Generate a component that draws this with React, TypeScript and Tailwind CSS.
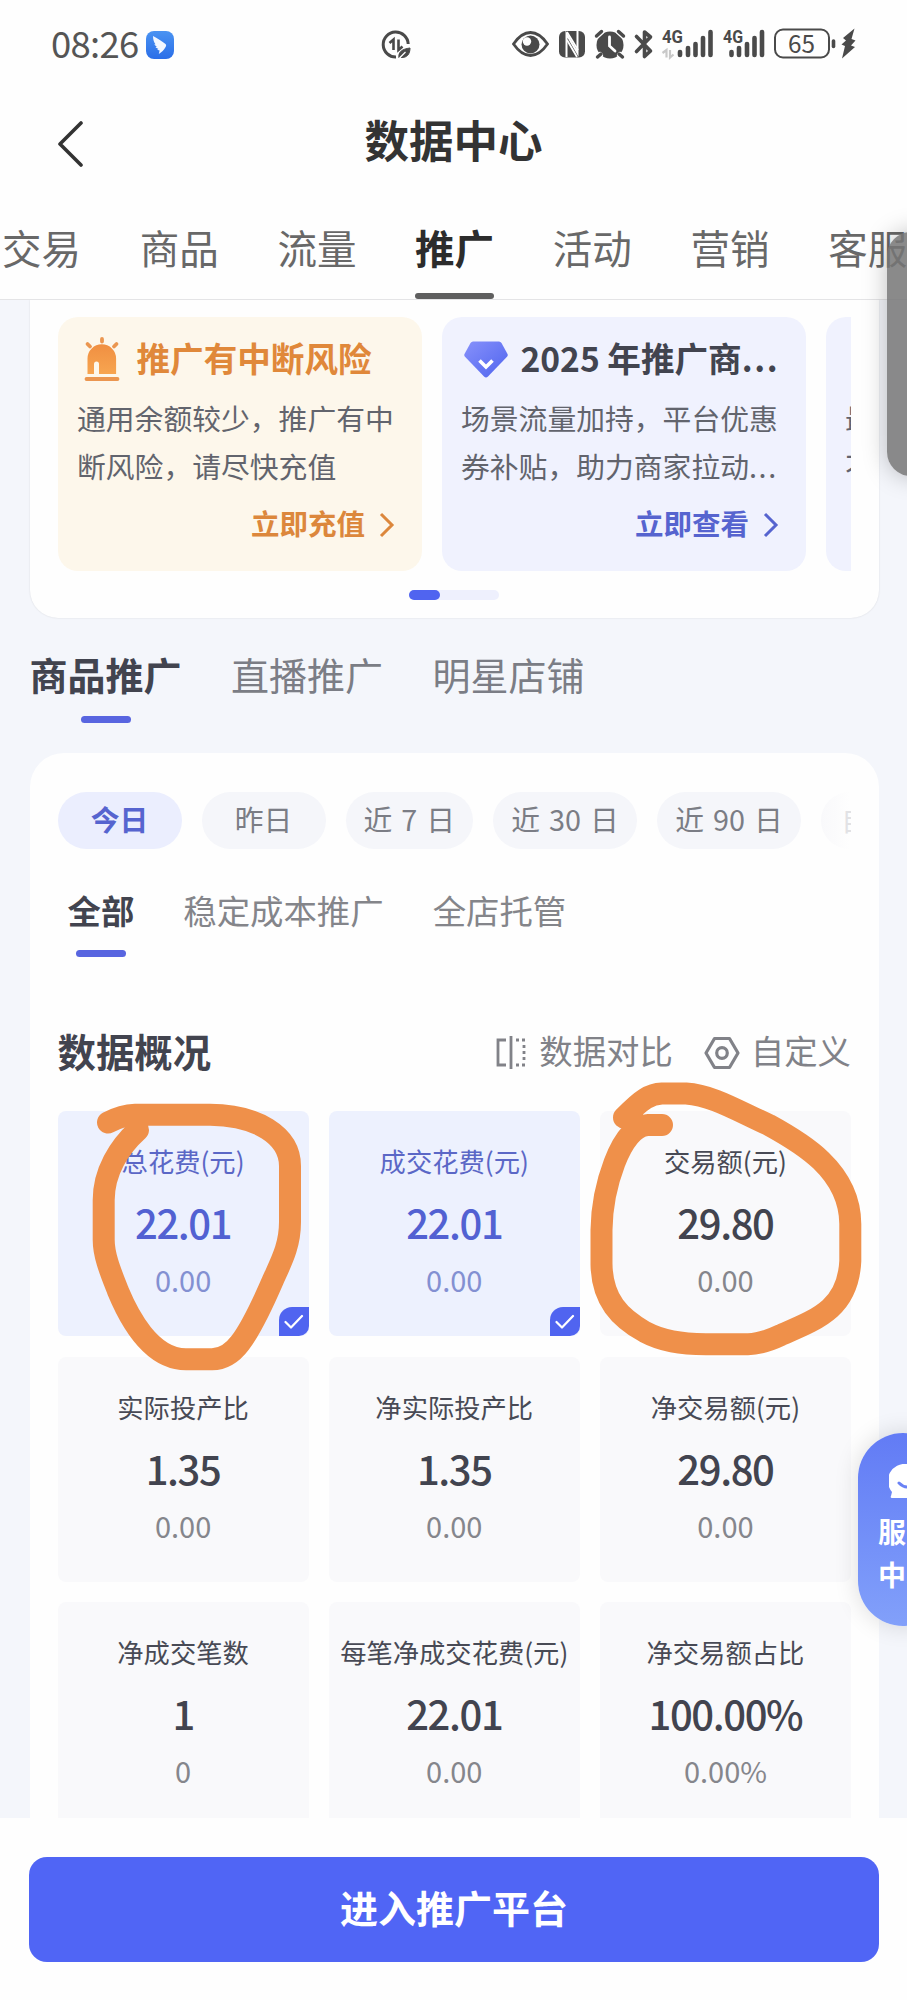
import React from "react";

const mainTabs = ["交易", "商品", "流量", "推广", "活动", "营销", "客服"];

const stats = [
  { label: "总花费(元)", value: "22.01", sub: "0.00", on: true },
  { label: "成交花费(元)", value: "22.01", sub: "0.00", on: true },
  { label: "交易额(元)", value: "29.80", sub: "0.00" },
  { label: "实际投产比", value: "1.35", sub: "0.00" },
  { label: "净实际投产比", value: "1.35", sub: "0.00" },
  { label: "净交易额(元)", value: "29.80", sub: "0.00" },
  { label: "净成交笔数", value: "1", sub: "0" },
  { label: "每笔净成交花费(元)", value: "22.01", sub: "0.00" },
  { label: "净交易额占比", value: "100.00%", sub: "0.00%" },
];

function Signal({ bars }: { bars: number[][] }) {
  return (
    <>
      {bars.map(([x, y]) => (
        <path key={x} d={`M${x} ${y}V55`} stroke="#4a4a4a" strokeWidth="4.6" strokeLinecap="round" />
      ))}
    </>
  );
}

function StatusBar() {
  return (
    <div className="flex h-[90px] shrink-0 items-center pl-[51px]">
      <span className="w-[95px] pb-[4px] text-[36.500px] leading-none font-normal tracking-[-0.7px] whitespace-nowrap text-[#555]">08:26</span>
      <svg className="h-7 w-7" viewBox="0 0 28 28">
        <defs>
          <linearGradient id="ding" x1="0" y1="0" x2="0" y2="1">
            <stop offset="0" stopColor="#4a93f2" />
            <stop offset="1" stopColor="#2a6ee8" />
          </linearGradient>
        </defs>
        <rect width="28" height="28" rx="8" fill="url(#ding)" />
        <path d="M7 5c5 3 9 5 12.500 8 1 1 .7 2-.2 3.500-1.300 2.200-3.500 4.800-6.500 6.500l.8-3.500-2.500-.8 1.300-.8-3-1.600 1.400-.5-2.600-2.300 1.300-.2C8 11.500 7 8.500 7 5z" fill="#f3f8ff" />
      </svg>
      <svg className="ml-[207px] h-[30px] w-[30px]" viewBox="0 0 30 30" fill="none" stroke="#4a4a4a">
        <path d="M15 27A12.500 12.500 0 1 1 27.200 14" strokeWidth="3" />
        <path d="M8.500 13l4-3.500V20M17.500 9.500V20l4-3.500" strokeWidth="2.600" />
        <path d="M18 28c-1-6 3-9 11-10 0 6-3 10-9 9.500l5-5.500" fill="#4a4a4a" strokeWidth="1" />
        <path d="M18.500 28l6-6" stroke="#fff" strokeWidth="1.200" />
      </svg>
      <svg className="ml-[100px] h-[90px] w-[346px]" viewBox="511 0 346 90" fill="none">
        <path d="M513.500 44C519 36 524 32.500 530.500 32.500S542 36 547.500 44C542 52 537 55.500 530.500 55.500S519 52 513.500 44z" stroke="#4a4a4a" strokeWidth="2.800" />
        <circle cx="530.500" cy="44.500" r="9" fill="#4a4a4a" />
        <circle cx="527" cy="41.500" r="4.200" fill="#fff" />
        <rect x="559" y="31" width="26" height="26.500" rx="6" fill="#4a4a4a" />
        <path d="M566.500 57V34L577.500 53V31" stroke="#fff" strokeWidth="2" />
        <path d="M567 32l11 18M567 40l10 17" stroke="#fff" strokeWidth="1.800" />
        <circle cx="610" cy="45" r="13.500" fill="#4a4a4a" />
        <path d="M596.500 36l5-4.500M623.500 36l-5-4.500M600 55l-2.500 2.500M620 55l2.500 2.500" stroke="#fefefe" strokeWidth="6" strokeLinecap="round" />
        <path d="M596.500 36l5-4.500M623.500 36l-5-4.500M601 54l-3.500 3M619 54l3.500 3" stroke="#4a4a4a" strokeWidth="3.400" strokeLinecap="round" />
        <path d="M609.500 37v9l5.500 5" stroke="#fff" strokeWidth="2.800" strokeLinecap="round" />
        <path d="M636.500 36.500l14 14.500-6 5.500V32l6 5-14 14.500" stroke="#4a4a4a" strokeWidth="3.600" strokeLinecap="round" strokeLinejoin="round" />
        <text x="662" y="43" className="font-['Roboto','Liberation_Sans',sans-serif] text-[18px] font-bold" textLength="21" lengthAdjust="spacingAndGlyphs" fill="#4a4a4a">4G</text>
        <path d="M662.500 53l4-3v7.500M670 50v7.500l3.500-3" stroke="#c8c8c8" strokeWidth="2.200" />
        <Signal bars={[[680, 52], [688, 48], [695.500, 44], [703, 38], [710.500, 32]]} />
        <text x="723" y="43" className="font-['Roboto','Liberation_Sans',sans-serif] text-[18px] font-bold" textLength="20" lengthAdjust="spacingAndGlyphs" fill="#4a4a4a">4G</text>
        <Signal bars={[[731.500, 52], [739, 48], [747, 44], [754.500, 38], [762, 32]]} />
        <rect x="775" y="29.500" width="54" height="28" rx="8" stroke="#4a4a4a" strokeWidth="2" />
        <text x="788" y="53" className="font-['Noto_Sans_CJK_SC',sans-serif] text-[25px] font-normal" textLength="27" lengthAdjust="spacingAndGlyphs" fill="#4a4a4a">65</text>
        <path d="M833.500 41v5.500" stroke="#4a4a4a" strokeWidth="3.600" strokeLinecap="round" />
        <path d="M854.500 28.500L843 38l3 2.500-4.500 4 3.500 1.500-3 12.500L855 47l-4-1.500 4.500-5-4-1.500z" fill="#4a4a4a" />
      </svg>
    </div>
  );
}

function Chevron() {
  return (
    <svg className="mt-[3px] h-[26px] w-4" viewBox="0 0 16 26" fill="none" stroke="currentColor" strokeWidth="3">
      <path d="M2 2l11 11L2 24" />
    </svg>
  );
}

function Siren() {
  return (
    <svg className="mt-[2px] h-[46px] w-9" viewBox="0 0 36 46">
      <defs>
        <linearGradient id="siren" x1="0" y1="0" x2="0" y2="1">
          <stop offset="0" stopColor="#f08f42" />
          <stop offset="1" stopColor="#f7a550" />
        </linearGradient>
      </defs>
      <path d="M3.500 38V22.500a14.300 14.300 0 0 1 28.600 0V38H15V28a2.500 2.500 0 0 0-5 0v10z" fill="url(#siren)" />
      <path d="M2.500 43h31M18 3v2.500M3.500 8l2.500 2.500M32.500 8L30 10.500" stroke="#eb9650" strokeWidth="3.800" strokeLinecap="round" />
    </svg>
  );
}

function Gem() {
  return (
    <svg className="mt-[3px] h-[37px] w-[44px]" viewBox="0 0 44 37">
      <defs>
        <linearGradient id="gem" x1="0" y1="0" x2="1" y2="1">
          <stop offset="0" stopColor="#8791fb" />
          <stop offset="1" stopColor="#4f64ee" />
        </linearGradient>
      </defs>
      <path d="M9 .5h26q1.500 0 2.500 1.500l6 11q.7 1.500-.5 2.800L24 35.500q-2 1.800-4 0L1 15.800q-1.200-1.300-.5-2.800l6-11Q7.500.5 9 .5z" fill="url(#gem)" />
      <path d="M15.500 19.500l6.500 6.500 6.500-6.500" fill="none" stroke="#fff" strokeWidth="3.600" />
    </svg>
  );
}

function Clipped({ text }: { text: string }) {
  return (
    <>
      {text}
      <span className="tracking-[1.600px]">...</span>
    </>
  );
}

function PromoCard(p: { icon: React.ReactNode; title: React.ReactNode; lines: React.ReactNode[]; link: string; card: string; titleCls: string; linkCls: string; iconCls: string }) {
  return (
    <div className={`flex h-[254px] w-[364.500px] shrink-0 flex-col rounded-[20px] ${p.card}`}>
      <div className="mt-[16px] flex h-[50px] items-center">
        <div className={`flex w-[79px] shrink-0 ${p.iconCls}`}>{p.icon}</div>
        <div className={`text-[33.600px] leading-none font-bold whitespace-nowrap ${p.titleCls}`}>{p.title}</div>
      </div>
      <div className="mt-[11px] pl-[19.500px] text-[28.800px] leading-[48.500px] whitespace-nowrap text-[#62646d]">
        {p.lines.map((l, i) => (
          <div key={i}>{l}</div>
        ))}
      </div>
      <div className={`mt-[13px] flex h-[40px] items-center justify-end gap-[14px] pr-[27px] text-[28.500px] font-bold ${p.linkCls}`}>
        {p.link}
        {p.link && <Chevron />}
      </div>
    </div>
  );
}

function StatCard({ label, value, sub, on }: { label: string; value: string; sub: string; on?: boolean }) {
  return (
    <div className={`relative flex h-[225px] flex-col items-center rounded-lg ${on ? "bg-[#edf1fe]" : "bg-[#f9f9fb]"}`}>
      <div className={`mt-[30px] text-[26.300px] leading-10 whitespace-nowrap ${on ? "text-[#5b67c6]" : "text-[#484a55]"}`}>{label}</div>
      <div className={`mt-[15px] text-[40px] leading-[52px] font-medium tracking-[-1.400px] ${on ? "text-[#5261d2]" : "text-[#42444f]"}`}>{value}</div>
      <div className={`mt-[11px] text-[29px] leading-10 ${on ? "text-[#8390d2]" : "text-[#85868c]"}`}>{sub}</div>
      {on && (
        <div className="absolute right-0 bottom-0 flex h-[29px] w-[30px] items-center justify-center rounded-tl-[13px] rounded-br-[10px] bg-[#5064f0]">
          <svg className="h-4 w-5" viewBox="0 0 20 16" fill="none" stroke="#fff" strokeWidth="2.200" strokeLinecap="round" strokeLinejoin="round">
            <path d="M1.500 8l5.500 5.500L18 2" />
          </svg>
        </div>
      )}
    </div>
  );
}

function Chip({ text, cls }: { text: string; cls: string }) {
  return <div className={`flex h-[57px] shrink-0 items-center justify-center rounded-full pb-[4px] text-[28.800px] [word-spacing:2.500px] whitespace-nowrap ${cls}`}>{text}</div>;
}

export default function App() {
  return (
    <div className="relative flex h-[2000px] w-[907px] flex-col overflow-hidden bg-[#fefefe] font-['Noto_Sans_CJK_SC',sans-serif]">
      <StatusBar />
      <div className="grid h-[102px] shrink-0 grid-cols-[116px_1fr_116px] items-center">
        <svg className="mt-[3px] ml-[56px] h-[48px] w-7" viewBox="0 0 28 48" fill="none" stroke="#333" strokeWidth="3.600" strokeLinecap="round" strokeLinejoin="round">
          <path d="M25 4L4 25l21 21" />
        </svg>
        <h1 className="pb-[3px] text-center text-[44.500px] leading-none font-bold text-[#333]">数据中心</h1>
      </div>
      <div className="flex h-[108px] shrink-0 gap-[58.700px] overflow-hidden border-b border-[#e4e4e6] pl-[2px]">
        {mainTabs.map((t) => (
          <div key={t} className={`relative flex h-full w-[79px] shrink-0 justify-center pt-[30px] text-[39.500px] leading-[50px] whitespace-nowrap ${t === "推广" ? "font-bold text-[#2c2c2c]" : "text-[#686868]"}`}>
            {t}
            {t === "推广" && <div className="absolute bottom-0 h-[6px] w-[79px] rounded-full bg-[#5f5f5f]" />}
          </div>
        ))}
      </div>

      <main className="flex h-[1518px] shrink-0 flex-col overflow-hidden bg-[#f4f6fb] pr-[28px] pl-[29.500px]">
        <section className="flex h-[318px] shrink-0 flex-col rounded-b-[28px] bg-[#fefefe] px-[28px] pt-[16.500px] shadow-[0_0_2px_rgba(0,0,0,0.12)]">
          <div className="flex gap-[19.500px] overflow-hidden">
            <PromoCard icon={<Siren />} title="推广有中断风险" lines={["通用余额较少，推广有中", "断风险，请尽快充值"]} link="立即充值" card="bg-[#fdf7eb]" titleCls="text-[#e0883a]" linkCls="text-[#dc873c]" iconCls="pl-[26px]" />
            <PromoCard icon={<Gem />} title={<Clipped text="2025 年推广商" />} lines={["场景流量加持，平台优惠", <Clipped text="券补贴，助力商家拉动" />]} link="立即查看" card="bg-[#f0f2fe]" titleCls="text-[#42444f]" linkCls="text-[#5664cf]" iconCls="pl-[22px]" />
            <PromoCard icon={null} title="" lines={["最新", "不限"]} link="" card="bg-[#f0f2fe]" titleCls="" linkCls="" iconCls="" />
          </div>
          <div className="mt-[19px] h-[10px] w-[90px] self-center rounded-full bg-[#eef0fd]">
            <div className="h-full w-[31px] rounded-full bg-[#5064f0]" />
          </div>
        </section>

        <nav className="flex h-[135px] shrink-0 gap-[49.500px] pt-[31px] text-[38px] leading-[50px] text-[#7b7d85]">
          <div className="flex flex-col items-center font-bold text-[#42444f]">
            商品推广
            <div className="mt-[17px] h-[7px] w-[50px] rounded-full bg-[#5865e0]" />
          </div>
          <div>直播推广</div>
          <div>明星店铺</div>
        </nav>

        <section className="flex shrink-0 flex-col rounded-t-[34px] bg-[#fefefe] px-[28px] pt-[39px]">
          <div className="flex gap-[20px] overflow-hidden">
            <Chip text="今日" cls="w-[124px] bg-[#ebeefe] font-bold text-[#5664cf]" />
            <Chip text="昨日" cls="w-[124px] bg-[#f5f6fa] text-[#7b7d85]" />
            <Chip text="近 7 日" cls="w-[127.500px] bg-[#f5f6fa] text-[#7b7d85]" />
            <Chip text="近 30 日" cls="w-[144px] bg-[#f5f6fa] text-[#7b7d85]" />
            <Chip text="近 90 日" cls="w-[144px] bg-[#f5f6fa] text-[#7b7d85]" />
            <div className="flex h-[57px] w-[144px] shrink-0 items-center rounded-full bg-linear-to-r from-[#f9f9fb] to-[#fefefe] to-20% pb-[4px] pl-[20px] text-[28px] text-[#e2e2e5]">自定义</div>
          </div>
          <div className="mt-[37px] flex gap-[49px] pl-[10px] text-[33.400px] leading-[48px] text-[#84858a]">
            <div className="flex flex-col items-center font-bold text-[#42444f]">
              全部
              <div className="mt-[16px] h-[7px] w-[50px] rounded-full bg-[#5865e0]" />
            </div>
            <div>稳定成本推广</div>
            <div>全店托管</div>
          </div>
          <div className="mt-[68px] flex h-[50px] items-center text-[33.400px] leading-none text-[#818288]">
            <h2 className="flex-1 text-[38.400px] font-bold text-[#42444f]">数据概况</h2>
            <svg className="mt-[5px] h-[34px] w-[30px]" viewBox="0 0 30 34" fill="none" stroke="currentColor" strokeWidth="2.800">
              <path d="M10 4H2v25h8M15 0v33" />
              <path d="M20 4h9.500M20 29h9.500M28 9v17" strokeDasharray="3 3" />
            </svg>
            <span className="ml-[13px]">数据对比</span>
            <svg className="mt-[5px] ml-[31px] h-[34px] w-[36px]" viewBox="0 0 36 34" fill="none" stroke="currentColor" strokeWidth="3.200" strokeLinejoin="round">
              <path d="M10.500 2.500h15L34 17l-8.500 14.500h-15L2 17z" />
              <circle cx="18" cy="17" r="5.300" />
            </svg>
            <span className="ml-[11px]">自定义</span>
          </div>
          <div className="mt-[36px] grid grid-cols-3 gap-x-[20px] gap-y-[20.500px]">
            {stats.map((s) => (
              <StatCard key={s.label} {...s} />
            ))}
          </div>
        </section>
      </main>

      <footer className="flex h-[182px] shrink-0 items-start bg-[#fefefe] pt-[38.500px] pr-[28px] pl-[29px]">
        <button className="h-[105px] w-full rounded-[18px] bg-[#5065f5] pb-[5px] text-[38px] font-bold text-white">进入推广平台</button>
      </footer>

      <svg className="pointer-events-none absolute top-[1070px] left-0 h-[320px] w-[907px]" viewBox="0 1070 907 320" fill="none" stroke="#ef904a" strokeWidth="22" strokeLinecap="round" strokeLinejoin="round">
        <path d="M108 1122.500Q122 1115 135 1114.700H210C256 1115 290 1135 290 1166V1222C290 1246 281 1262 273 1280C260 1310 250 1330 240 1343Q228 1359 212 1359.300H186C150 1359 128 1315 118 1291C111 1273 103.700 1256 103.700 1240V1200C103.700 1172 119 1147 138 1130" />
        <path d="M624 1117.500C642 1099 650 1094 662 1093.500H686C712 1095 738 1111 769 1125C800 1142 850 1170 850.300 1224V1261C848 1308 818 1319 781 1335Q762 1344 748 1344.200H706C680 1344 662 1341 645 1332C620 1318 602 1300 601.500 1264V1230C602 1190 620 1126 648 1125H662" />
      </svg>

      <div className="absolute top-[232px] -right-[30px] h-[244px] w-[50px] rounded-l-[24px] bg-[#757575]/85 shadow-[0_0_24px_rgba(0,0,0,0.25)]" />

      <div className="absolute top-[1433px] left-[858px] flex h-[193px] w-[90px] flex-col rounded-[46px] bg-linear-to-b from-[#627bf5] to-[#82a0fa] pt-[31px] pl-[20px] text-[28px] leading-[42.500px] font-bold text-white shadow-[0_0_24px_rgba(0,0,0,0.14)]">
        <svg className="ml-[11px] h-[35px] w-[38px]" viewBox="0 0 38 35">
          <path d="M18 0a17 17 0 0 1 0 34H3q-2 0-1-2l1-4A17 17 0 0 1 18 0z" fill="#fff" />
          <path d="M10 19q8 8 17 0" fill="none" stroke="#6a82f5" strokeWidth="3" strokeLinecap="round" />
        </svg>
        <div className="mt-[11px] whitespace-nowrap">服务</div>
        <div className="whitespace-nowrap">中心</div>
      </div>
    </div>
  );
}
